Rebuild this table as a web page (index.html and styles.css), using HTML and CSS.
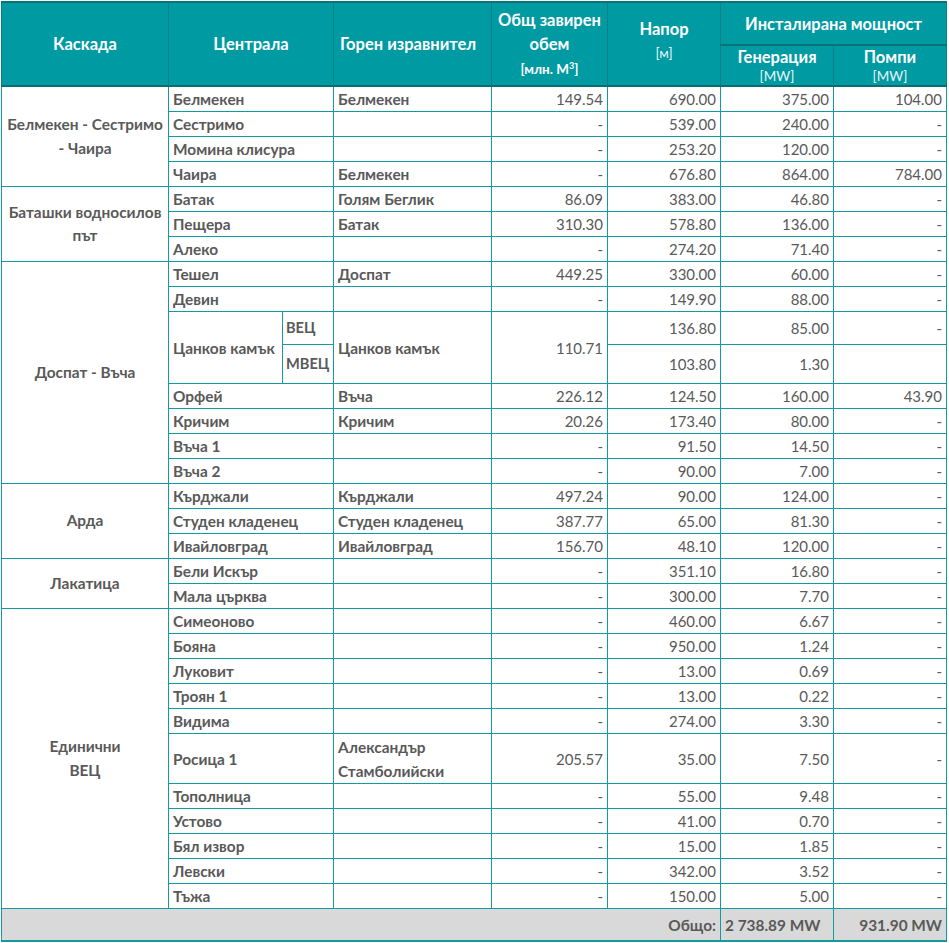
FILE: index.html
```html
<!DOCTYPE html>
<html lang="bg">
<head>
<meta charset="utf-8">
<title>Каскади</title>
<link rel="stylesheet" href="styles.css">
</head>
<body>
<table class="tbl">
  <colgroup>
    <col class="c-kaskada">
    <col class="c-central">
    <col class="c-sub">
    <col class="c-upper">
    <col class="c-vol">
    <col class="c-head">
    <col class="c-gen">
    <col class="c-pump">
  </colgroup>
  <thead>
    <tr class="h1">
      <th rowspan="2">Каскада</th>
      <th rowspan="2" colspan="2">Централа</th>
      <th rowspan="2" class="th-left">Горен изравнител</th>
      <th rowspan="2" class="th-vol">Общ завирен обем<br><span class="unit-b">[млн. М<sup>3</sup>]</span></th>
      <th rowspan="2" class="th-napor">Напор<br><span class="unit">[м]</span></th>
      <th colspan="2" class="th-group">Инсталирана мощност</th>
    </tr>
    <tr class="h2">
      <th>Генерация<br><span class="unit">[MW]</span></th>
      <th>Помпи<br><span class="unit">[MW]</span></th>
    </tr>
  </thead>
  <tbody>
    <tr><td rowspan="4" class="kas">Белмекен - Сестримо - Чаира</td><td colspan="2" class="name">Белмекен</td><td class="name">Белмекен</td><td class="num">149.54</td><td class="num">690.00</td><td class="num">375.00</td><td class="num">104.00</td></tr>
    <tr><td colspan="2" class="name">Сестримо</td><td></td><td class="num">-</td><td class="num">539.00</td><td class="num">240.00</td><td class="num">-</td></tr>
    <tr><td colspan="2" class="name">Момина клисура</td><td></td><td class="num">-</td><td class="num">253.20</td><td class="num">120.00</td><td class="num">-</td></tr>
    <tr><td colspan="2" class="name">Чаира</td><td class="name">Белмекен</td><td class="num">-</td><td class="num">676.80</td><td class="num">864.00</td><td class="num">784.00</td></tr>

    <tr><td rowspan="3" class="kas">Баташки водносилов път</td><td colspan="2" class="name">Батак</td><td class="name">Голям Беглик</td><td class="num">86.09</td><td class="num">383.00</td><td class="num">46.80</td><td class="num">-</td></tr>
    <tr><td colspan="2" class="name">Пещера</td><td class="name">Батак</td><td class="num">310.30</td><td class="num">578.80</td><td class="num">136.00</td><td class="num">-</td></tr>
    <tr><td colspan="2" class="name">Алеко</td><td></td><td class="num">-</td><td class="num">274.20</td><td class="num">71.40</td><td class="num">-</td></tr>

    <tr><td rowspan="8" class="kas">Доспат - Въча</td><td colspan="2" class="name">Тешел</td><td class="name">Доспат</td><td class="num">449.25</td><td class="num">330.00</td><td class="num">60.00</td><td class="num">-</td></tr>
    <tr><td colspan="2" class="name">Девин</td><td></td><td class="num">-</td><td class="num">149.90</td><td class="num">88.00</td><td class="num">-</td></tr>
    <tr class="r-vec"><td rowspan="2" class="name">Цанков камък</td><td class="name sub">ВЕЦ</td><td rowspan="2" class="name">Цанков камък</td><td rowspan="2" class="num">110.71</td><td class="num">136.80</td><td class="num">85.00</td><td class="num">-</td></tr>
    <tr class="r-mvec"><td class="name sub">МВЕЦ</td><td class="num">103.80</td><td class="num">1.30</td><td class="num"></td></tr>
    <tr><td colspan="2" class="name">Орфей</td><td class="name">Въча</td><td class="num">226.12</td><td class="num">124.50</td><td class="num">160.00</td><td class="num">43.90</td></tr>
    <tr><td colspan="2" class="name">Кричим</td><td class="name">Кричим</td><td class="num">20.26</td><td class="num">173.40</td><td class="num">80.00</td><td class="num">-</td></tr>
    <tr><td colspan="2" class="name">Въча 1</td><td></td><td class="num">-</td><td class="num">91.50</td><td class="num">14.50</td><td class="num">-</td></tr>
    <tr><td colspan="2" class="name">Въча 2</td><td></td><td class="num">-</td><td class="num">90.00</td><td class="num">7.00</td><td class="num">-</td></tr>

    <tr><td rowspan="3" class="kas">Арда</td><td colspan="2" class="name">Кърджали</td><td class="name">Кърджали</td><td class="num">497.24</td><td class="num">90.00</td><td class="num">124.00</td><td class="num">-</td></tr>
    <tr><td colspan="2" class="name">Студен кладенец</td><td class="name">Студен кладенец</td><td class="num">387.77</td><td class="num">65.00</td><td class="num">81.30</td><td class="num">-</td></tr>
    <tr><td colspan="2" class="name">Ивайловград</td><td class="name">Ивайловград</td><td class="num">156.70</td><td class="num">48.10</td><td class="num">120.00</td><td class="num">-</td></tr>

    <tr><td rowspan="2" class="kas">Лакатица</td><td colspan="2" class="name">Бели Искър</td><td></td><td class="num">-</td><td class="num">351.10</td><td class="num">16.80</td><td class="num">-</td></tr>
    <tr><td colspan="2" class="name">Мала църква</td><td></td><td class="num">-</td><td class="num">300.00</td><td class="num">7.70</td><td class="num">-</td></tr>

    <tr><td rowspan="12" class="kas">Единични<br>ВЕЦ</td><td colspan="2" class="name">Симеоново</td><td></td><td class="num">-</td><td class="num">460.00</td><td class="num">6.67</td><td class="num">-</td></tr>
    <tr><td colspan="2" class="name">Бояна</td><td></td><td class="num">-</td><td class="num">950.00</td><td class="num">1.24</td><td class="num">-</td></tr>
    <tr><td colspan="2" class="name">Луковит</td><td></td><td class="num">-</td><td class="num">13.00</td><td class="num">0.69</td><td class="num">-</td></tr>
    <tr><td colspan="2" class="name">Троян 1</td><td></td><td class="num">-</td><td class="num">13.00</td><td class="num">0.22</td><td class="num">-</td></tr>
    <tr><td colspan="2" class="name">Видима</td><td></td><td class="num">-</td><td class="num">274.00</td><td class="num">3.30</td><td class="num">-</td></tr>
    <tr class="r-tall"><td colspan="2" class="name">Росица 1</td><td class="name">Александър Стамболийски</td><td class="num">205.57</td><td class="num">35.00</td><td class="num">7.50</td><td class="num">-</td></tr>
    <tr><td colspan="2" class="name">Тополница</td><td></td><td class="num">-</td><td class="num">55.00</td><td class="num">9.48</td><td class="num">-</td></tr>
    <tr><td colspan="2" class="name">Устово</td><td></td><td class="num">-</td><td class="num">41.00</td><td class="num">0.70</td><td class="num">-</td></tr>
    <tr><td colspan="2" class="name">Бял извор</td><td></td><td class="num">-</td><td class="num">15.00</td><td class="num">1.85</td><td class="num">-</td></tr>
    <tr><td colspan="2" class="name">Левски</td><td></td><td class="num">-</td><td class="num">342.00</td><td class="num">3.52</td><td class="num">-</td></tr>
    <tr><td colspan="2" class="name">Тъжа</td><td></td><td class="num">-</td><td class="num">150.00</td><td class="num">5.00</td><td class="num">-</td></tr>
  </tbody>
  <tfoot>
    <tr>
      <td colspan="6" class="tot-label">Общо:</td>
      <td class="tot-gen">2 738.89 MW</td>
      <td class="tot-pump">931.90 MW</td>
    </tr>
  </tfoot>
</table>
</body>
</html>
```

FILE: styles.css
```css
html, body {
  margin: 0;
  padding: 0;
  background: #ffffff;
}
body {
  padding: 1px 0 0 1px;
  font-family: "Lato", "Open Sans", sans-serif;
  font-size: 14.5px;
  color: #595959;
}
.tbl {
  border-collapse: collapse;
  table-layout: fixed;
  width: 946px;
}
.c-kaskada { width: 167px; }
.c-central { width: 114px; }
.c-sub { width: 51px; }
.c-upper { width: 158px; }
.c-vol { width: 116px; }
.c-head { width: 113px; }
.c-gen { width: 113px; }
.c-pump { width: 113px; }

.tbl th, .tbl td {
  border: 1px solid #139a9f;
  padding: 0 4px;
  line-height: 18px;
}
.tbl thead th {
  background: #009aa3;
  color: #ffffff;
  font-weight: 700;
  font-size: 16.5px;
  line-height: 22px;
  text-align: center;
  vertical-align: middle;
  border-color: #0b7f86;
  border-top: 2px solid #0a7378;
}
.tbl thead tr.h1 th { height: 41px; }
.tbl thead tr.h2 th {
  height: 37px;
  line-height: 18px;
  padding-top: 2px;
  padding-bottom: 0;
  border-bottom: 2px solid #0a6d72;
}
.tbl thead tr.h1 th[rowspan] { border-bottom: 2px solid #0a6d72; }
.tbl thead th.th-left { text-align: left; padding-left: 6px; }
.tbl thead th.th-vol { line-height: 24px; padding: 0 2px; }
.tbl thead th.th-napor { line-height: 23px; padding-bottom: 6px; }
.unit {
  font-weight: 400;
  font-size: 13.5px;
  color: #e6f7f8;
}
.unit-b {
  font-weight: 700;
  font-size: 13.5px;
}
.unit-b sup { font-size: 9px; line-height: 0; }

.tbl tbody td {
  height: 24px;
  vertical-align: middle;
}
.tbl td.kas {
  text-align: center;
  font-weight: 700;
  font-size: 15.4px;
  line-height: 23.5px;
  padding: 0 4px;
}
.tbl td.name {
  font-weight: 700;
  font-size: 15.4px;
  text-align: left;
  line-height: 24px;
}
.tbl tbody td.sub {
  padding: 0 2px 0 3px;
  font-size: 14.6px;
}
.num {
  text-align: right;
  padding-right: 5px;
  font-size: 15px;
}
.tbl tbody tr.r-vec td { height: 32px; }
.tbl tbody tr.r-mvec td { height: 38px; }
.tbl tbody tr.r-tall td { height: 49px; }

.tbl tfoot td {
  background: #d9d9d9;
  height: 31px;
  font-weight: 700;
  font-size: 15.4px;
  vertical-align: middle;
  border-bottom: 2px solid #139a9f;
}
.tot-label { text-align: right; }
.tot-gen { text-align: left; padding-left: 8px; }
.tot-pump { text-align: right; }
```
